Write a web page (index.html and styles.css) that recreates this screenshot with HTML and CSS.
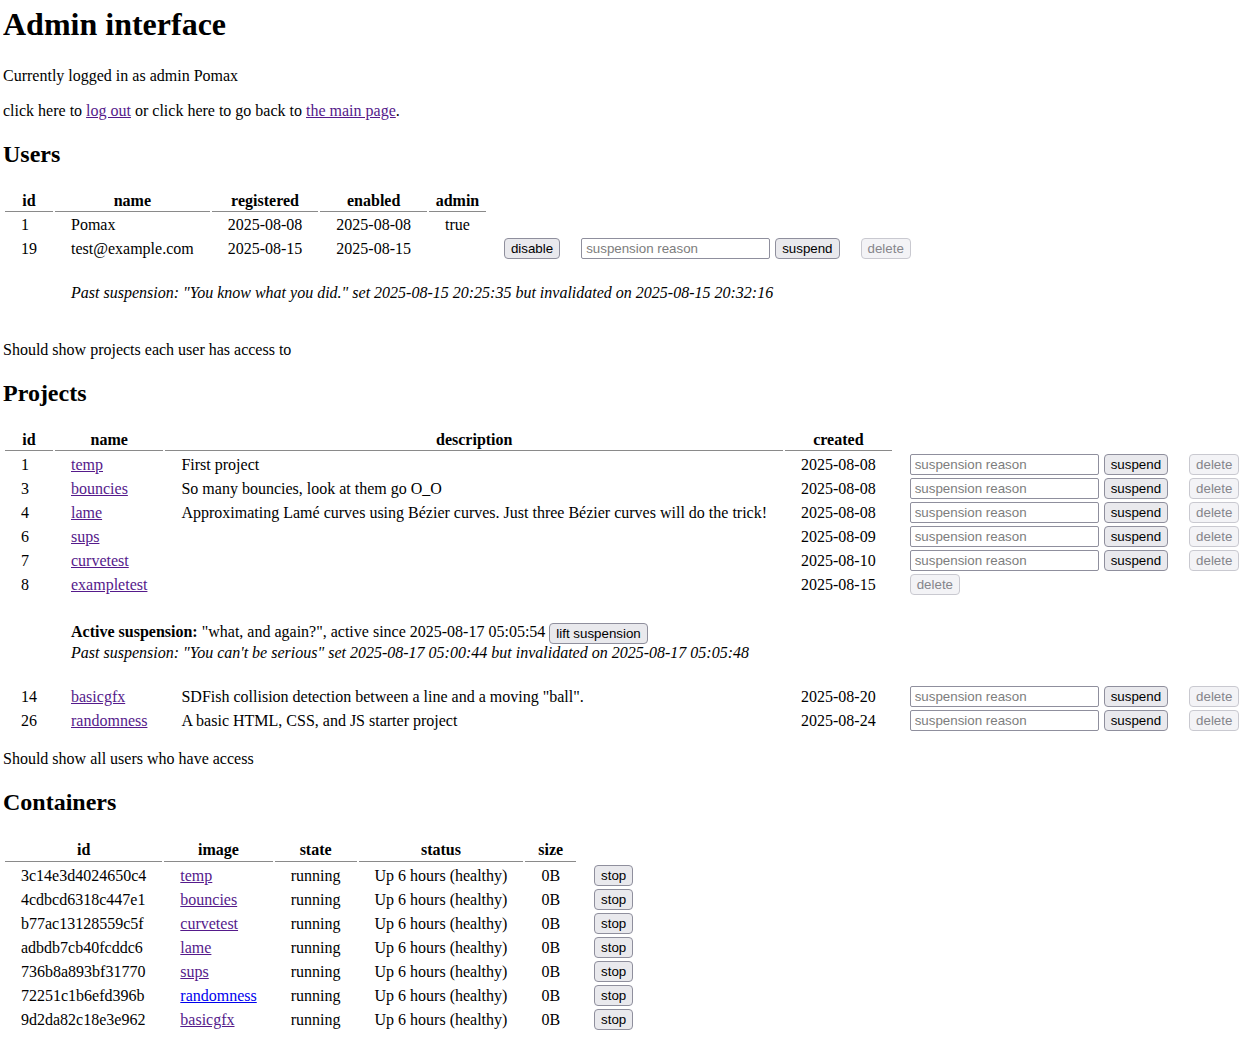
FILE: index.html
```html
<!DOCTYPE html>
<html lang="en">
<head>
<meta charset="utf-8">
<title>Admin interface</title>
<link rel="stylesheet" href="styles.css">
</head>
<body>
<h1>Admin interface</h1>
<p>Currently logged in as admin Pomax</p>
<p>click here to <a class="v" href="#">log out</a> or click here to go back to <a class="v" href="#">the main page</a>.</p>

<h2>Users</h2>
<table class="users">
  <thead>
    <tr><th>id</th><th>name</th><th>registered</th><th>enabled</th><th>admin</th></tr>
  </thead>
  <tbody>
    <tr><td>1</td><td>Pomax</td><td>2025-08-08</td><td>2025-08-08</td><td>true</td></tr>
    <tr class="ctl"><td>19</td><td>test@example.com</td><td>2025-08-15</td><td>2025-08-15</td><td></td><td class="act"><button>disable</button></td><td class="act"><input type="text" placeholder="suspension reason"><button class="sus">suspend</button></td><td class="act"><button disabled>delete</button></td></tr>
    <tr class="susp-u"><td></td><td colspan="7"><div class="past">Past suspension: "You know what you did." set 2025-08-15 20:25:35 but invalidated on 2025-08-15 20:32:16</div></td></tr>
  </tbody>
</table>
<p>Should show projects each user has access to</p>

<h2>Projects</h2>
<table class="projects">
  <thead>
    <tr><th>id</th><th>name</th><th>description</th><th>created</th></tr>
  </thead>
  <tbody>
    <tr class="ctl"><td>1</td><td><a class="v" href="#">temp</a></td><td>First project</td><td>2025-08-08</td><td class="act"><input type="text" placeholder="suspension reason"><button class="sus">suspend</button></td><td class="act"><button disabled>delete</button></td></tr>
    <tr class="ctl"><td>3</td><td><a class="v" href="#">bouncies</a></td><td>So many bouncies, look at them go O_O</td><td>2025-08-08</td><td class="act"><input type="text" placeholder="suspension reason"><button class="sus">suspend</button></td><td class="act"><button disabled>delete</button></td></tr>
    <tr class="ctl"><td>4</td><td><a class="v" href="#">lame</a></td><td>Approximating Lamé curves using Bézier curves. Just three Bézier curves will do the trick!</td><td>2025-08-08</td><td class="act"><input type="text" placeholder="suspension reason"><button class="sus">suspend</button></td><td class="act"><button disabled>delete</button></td></tr>
    <tr class="ctl"><td>6</td><td><a class="v" href="#">sups</a></td><td></td><td>2025-08-09</td><td class="act"><input type="text" placeholder="suspension reason"><button class="sus">suspend</button></td><td class="act"><button disabled>delete</button></td></tr>
    <tr class="ctl"><td>7</td><td><a class="v" href="#">curvetest</a></td><td></td><td>2025-08-10</td><td class="act"><input type="text" placeholder="suspension reason"><button class="sus">suspend</button></td><td class="act"><button disabled>delete</button></td></tr>
    <tr class="ctl"><td>8</td><td><a class="v" href="#">exampletest</a></td><td></td><td>2025-08-15</td><td class="act"><button disabled>delete</button></td></tr>
    <tr class="susp-p"><td></td><td colspan="5">
      <div class="active"><b>Active suspension:</b> "what, and again?", active since 2025-08-17 05:05:54 <button>lift suspension</button></div>
      <div class="past">Past suspension: "You can't be serious" set 2025-08-17 05:00:44 but invalidated on 2025-08-17 05:05:48</div>
    </td></tr>
    <tr class="ctl"><td>14</td><td><a class="v" href="#">basicgfx</a></td><td>SDFish collision detection between a line and a moving "ball".</td><td>2025-08-20</td><td class="act"><input type="text" placeholder="suspension reason"><button class="sus">suspend</button></td><td class="act"><button disabled>delete</button></td></tr>
    <tr class="ctl"><td>26</td><td><a class="v" href="#">randomness</a></td><td>A basic HTML, CSS, and JS starter project</td><td>2025-08-24</td><td class="act"><input type="text" placeholder="suspension reason"><button class="sus">suspend</button></td><td class="act"><button disabled>delete</button></td></tr>
  </tbody>
</table>
<p>Should show all users who have access</p>

<h2>Containers</h2>
<table class="containers">
  <thead>
    <tr><th>id</th><th>image</th><th>state</th><th>status</th><th>size</th></tr>
  </thead>
  <tbody>
    <tr class="ctl"><td>3c14e3d4024650c4</td><td><a class="v" href="#">temp</a></td><td>running</td><td>Up 6 hours (healthy)</td><td>0B</td><td class="act"><button>stop</button></td></tr>
    <tr class="ctl"><td>4cdbcd6318c447e1</td><td><a class="v" href="#">bouncies</a></td><td>running</td><td>Up 6 hours (healthy)</td><td>0B</td><td class="act"><button>stop</button></td></tr>
    <tr class="ctl"><td>b77ac13128559c5f</td><td><a class="v" href="#">curvetest</a></td><td>running</td><td>Up 6 hours (healthy)</td><td>0B</td><td class="act"><button>stop</button></td></tr>
    <tr class="ctl"><td>adbdb7cb40fcddc6</td><td><a class="v" href="#">lame</a></td><td>running</td><td>Up 6 hours (healthy)</td><td>0B</td><td class="act"><button>stop</button></td></tr>
    <tr class="ctl"><td>736b8a893bf31770</td><td><a class="v" href="#">sups</a></td><td>running</td><td>Up 6 hours (healthy)</td><td>0B</td><td class="act"><button>stop</button></td></tr>
    <tr class="ctl"><td>72251c1b6efd396b</td><td><a class="u" href="#">randomness</a></td><td>running</td><td>Up 6 hours (healthy)</td><td>0B</td><td class="act"><button>stop</button></td></tr>
    <tr class="ctl"><td>9d2da82c18e3e962</td><td><a class="v" href="#">basicgfx</a></td><td>running</td><td>Up 6 hours (healthy)</td><td>0B</td><td class="act"><button>stop</button></td></tr>
  </tbody>
</table>
</body>
</html>
```

FILE: styles.css
```css
html {
  background: #ffffff;
}

body {
  margin: 0 3px;
  font-family: "Liberation Serif", "Times New Roman", serif;
  font-size: 16px;
  line-height: 19px;
  color: #000000;
}

h1 {
  font-size: 32px;
  line-height: 37px;
  font-weight: bold;
  margin: 6px 0 23px;
}

h2 {
  font-size: 24px;
  line-height: 28px;
  font-weight: bold;
  margin: 20px 0;
}

p {
  margin: 16px 0;
}

a.v {
  color: #551a8b;
  text-decoration: underline;
}

a.u {
  color: #0000ee;
  text-decoration: underline;
}

table {
  border-collapse: separate;
  border-spacing: 2px;
}

th {
  padding: 0 1px;
  line-height: 21px;
  font-weight: bold;
  text-align: center;
  border-bottom: 1px solid #8a8a8a;
}

.containers th {
  padding: 1px 1px;
}

td {
  padding: 0 16px;
  line-height: 21px;
  text-align: left;
  vertical-align: middle;
  white-space: nowrap;
}

tr.ctl td {
  height: 22px;
}

td.act {
  padding: 0 3px 0 16px;
  line-height: 0;
}

button,
input {
  font-family: "Liberation Sans", Arial, sans-serif;
  font-size: 13.33px;
  line-height: 19px;
  height: 21px;
  box-sizing: border-box;
  vertical-align: middle;
  margin: 0;
}

button {
  background: #e9e9ed;
  border: 1px solid #8f8f9d;
  border-radius: 4px;
  padding: 0 6px;
  color: #000000;
}

button:disabled {
  background: #f3f3f6;
  border-color: #c9c9d0;
  color: #85858b;
}

button.sus {
  margin-left: 5px;
}

input {
  width: 189px;
  border: 1px solid #8f8f9d;
  border-radius: 2px;
  padding: 0 4px;
  background: #ffffff;
  color: #000000;
}

input::placeholder {
  color: #7d7d7d;
  opacity: 1;
}

.past {
  font-style: italic;
}

tr.susp-u td {
  padding: 21px 16px 19px;
}

tr.susp-p td {
  padding: 25px 16px 20px;
}

.active {
  height: 20px;
  line-height: 20px;
}

.active button {
  vertical-align: middle;
}

.susp-p .past {
  line-height: 21px;
}
```
